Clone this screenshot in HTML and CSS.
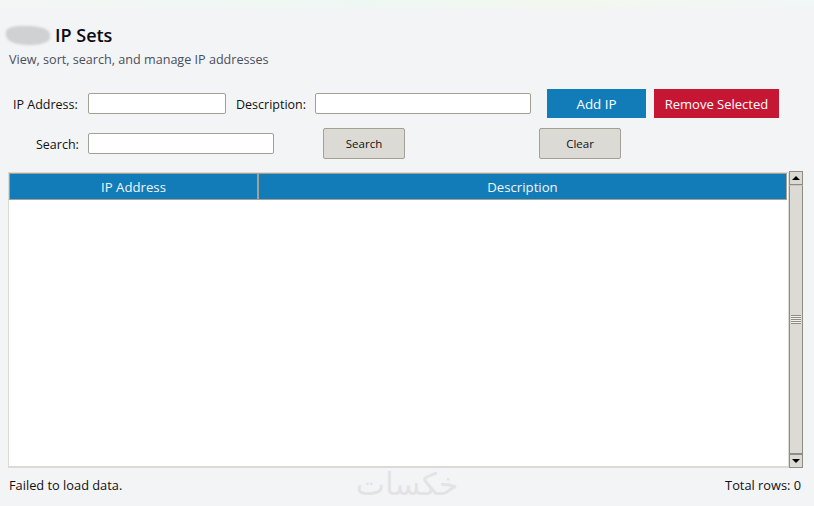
FILE: index.html
```html
<!DOCTYPE html>
<html lang="en">
<head>
<meta charset="utf-8">
<title>IP Sets</title>
<link rel="stylesheet" href="styles.css">
</head>
<body>
<div class="topstrip"></div>
<header class="head">
  <div class="title-row"><span class="blob"></span><h1 class="title">IP Sets</h1></div>
  <p class="subtitle">View, sort, search, and manage IP addresses</p>
</header>
<section class="form">
  <div class="row row-add">
    <label class="lab lab-ip">IP Address:</label>
    <input class="field field-ip" type="text">
    <label class="lab lab-desc">Description:</label>
    <input class="field field-desc" type="text">
    <button class="flat flat-add">Add IP</button>
    <button class="flat flat-remove">Remove Selected</button>
  </div>
  <div class="row row-search">
    <label class="lab lab-search">Search:</label>
    <input class="field field-search" type="text">
    <button class="std std-search">Search</button>
    <button class="std std-clear">Clear</button>
  </div>
</section>
<section class="tablewrap">
  <div class="table">
    <div class="thead">
      <div class="th th-ip">IP Address</div>
      <div class="th th-desc">Description</div>
    </div>
  </div>
  <div class="scrollbar">
    <div class="arrow"><span class="tri tri-up"></span></div>
    <div class="track"><span class="grip"></span></div>
    <div class="arrow"><span class="tri tri-down"></span></div>
  </div>
</section>
<footer class="status">
  <span>Failed to load data.</span>
  <span class="mark" dir="rtl" lang="ar">خكسات</span>
  <span>Total rows: 0</span>
</footer>
</body>
</html>
```
FILE: styles.css
```css
* { box-sizing: border-box; }
html, body { margin: 0; height: 506px; overflow: hidden; }
body {
  background: #f3f4f6;
  color: #111;
  font-family: "Open Sans", "Noto Sans", sans-serif;
  font-size: 12.6px;
  position: relative;
}
.topstrip {
  height: 7px;
  background: linear-gradient(90deg, #f3f6f4, #eef8f3 45%, #f3f8ee 70%, #f1f6f7);
}
.head { padding: 16px 0 0 6px; }
.title-row { display: flex; align-items: center; height: 24px; }
.blob {
  width: 44px;
  height: 19px;
  margin-right: 5px;
  background: #cfd1d3;
  border-radius: 30% 45% 40% 50%;
  filter: blur(1.2px);
}
.title { margin: 0; font-size: 18px; font-weight: 600; color: #0a0a14; line-height: 24px; }
.subtitle { margin: 4px 0 0 3px; color: #4a4f5a; font-size: 12.6px; line-height: 18px; }
.form { padding-top: 20px; }
.row { display: flex; align-items: center; }
.row-add { height: 29px; padding-left: 13px; }
.row-search { height: 31px; margin-top: 10px; padding-left: 36px; }
.lab { font-size: 12.5px; line-height: 16px; white-space: nowrap; padding-top: 2px; }
.lab-ip { width: 75px; }
.lab-desc { width: 79px; margin-left: 10px; }
.lab-search { width: 52px; }
.field {
  height: 21px;
  background: #fff;
  border: 1px solid #a3a095;
  border-radius: 2px;
  padding: 0 3px;
  outline: none;
}
.field-ip { width: 138px; }
.field-desc { width: 216px; }
.field-search { width: 186px; }
.flat {
  height: 29px;
  border: 0;
  color: #fff;
  font-family: inherit;
  font-size: 13.4px;
  font-weight: 500;
  padding: 0;
}
.flat-add { width: 99px; margin-left: 16px; background: #127cb9; }
.flat-remove { width: 125px; margin-left: 8px; background: #c51733; font-size: 13px; }
.std {
  width: 82px;
  height: 31px;
  background: #dbdad5;
  border: 1px solid #a3a095;
  border-radius: 2px;
  color: #111;
  font-family: inherit;
  font-size: 11.5px;
  padding: 0;
}
.std-search { margin-left: 49px; }
.std-clear { margin-left: 134px; }
.tablewrap { display: flex; align-items: stretch; height: 296px; margin: 12px 0 0 8px; width: 796px; }
.table {
  width: 781px;
  height: 296px;
  margin-top: 1px;
  background: #fff;
  border: 1px solid #dcdad4;
  border-bottom-width: 2px;
  padding: 0;
}
.thead { display: flex; height: 27px; }
.th {
  background: #127cb9;
  color: #f2f6f9;
  border: 1px solid #a3a095;
  font-size: 13.2px;
  font-weight: 500;
  display: flex;
  align-items: center;
  justify-content: center;
}
.th-ip { width: 249px; }
.th-desc { width: 529px; margin-left: 0; }
.scrollbar { width: 14px; height: 297px; display: flex; flex-direction: column; }
.arrow {
  height: 14px;
  background: #dbdad5;
  border: 1px solid #8f8c84;
  display: flex;
  align-items: center;
  justify-content: center;
}
.tri { width: 0; height: 0; border-left: 4px solid transparent; border-right: 4px solid transparent; }
.tri-up { border-bottom: 4px solid #000; }
.tri-down { border-top: 4px solid #000; }
.track {
  flex: 1;
  background: #dbdad5;
  border: 1px solid #8f8c84;
  border-top-color: #c9c7c1;
  display: flex;
  align-items: center;
  justify-content: center;
}
.grip {
  width: 10px;
  height: 9px;
  background: repeating-linear-gradient(#8f8c84 0 1px, #f2f1ee 1px 2px);
}
.status {
  display: flex;
  justify-content: space-between;
  align-items: center;
  height: 20px;
  padding: 0 13px 0 9px;
  margin-top: 8px;
  font-size: 12.8px;
}
.mark {
  position: absolute;
  left: 347px;
  top: 466px;
  width: 120px;
  text-align: center;
  font-family: "DejaVu Sans", sans-serif;
  font-size: 31px;
  line-height: 36px;
  color: #e2e3e5;
}
```
